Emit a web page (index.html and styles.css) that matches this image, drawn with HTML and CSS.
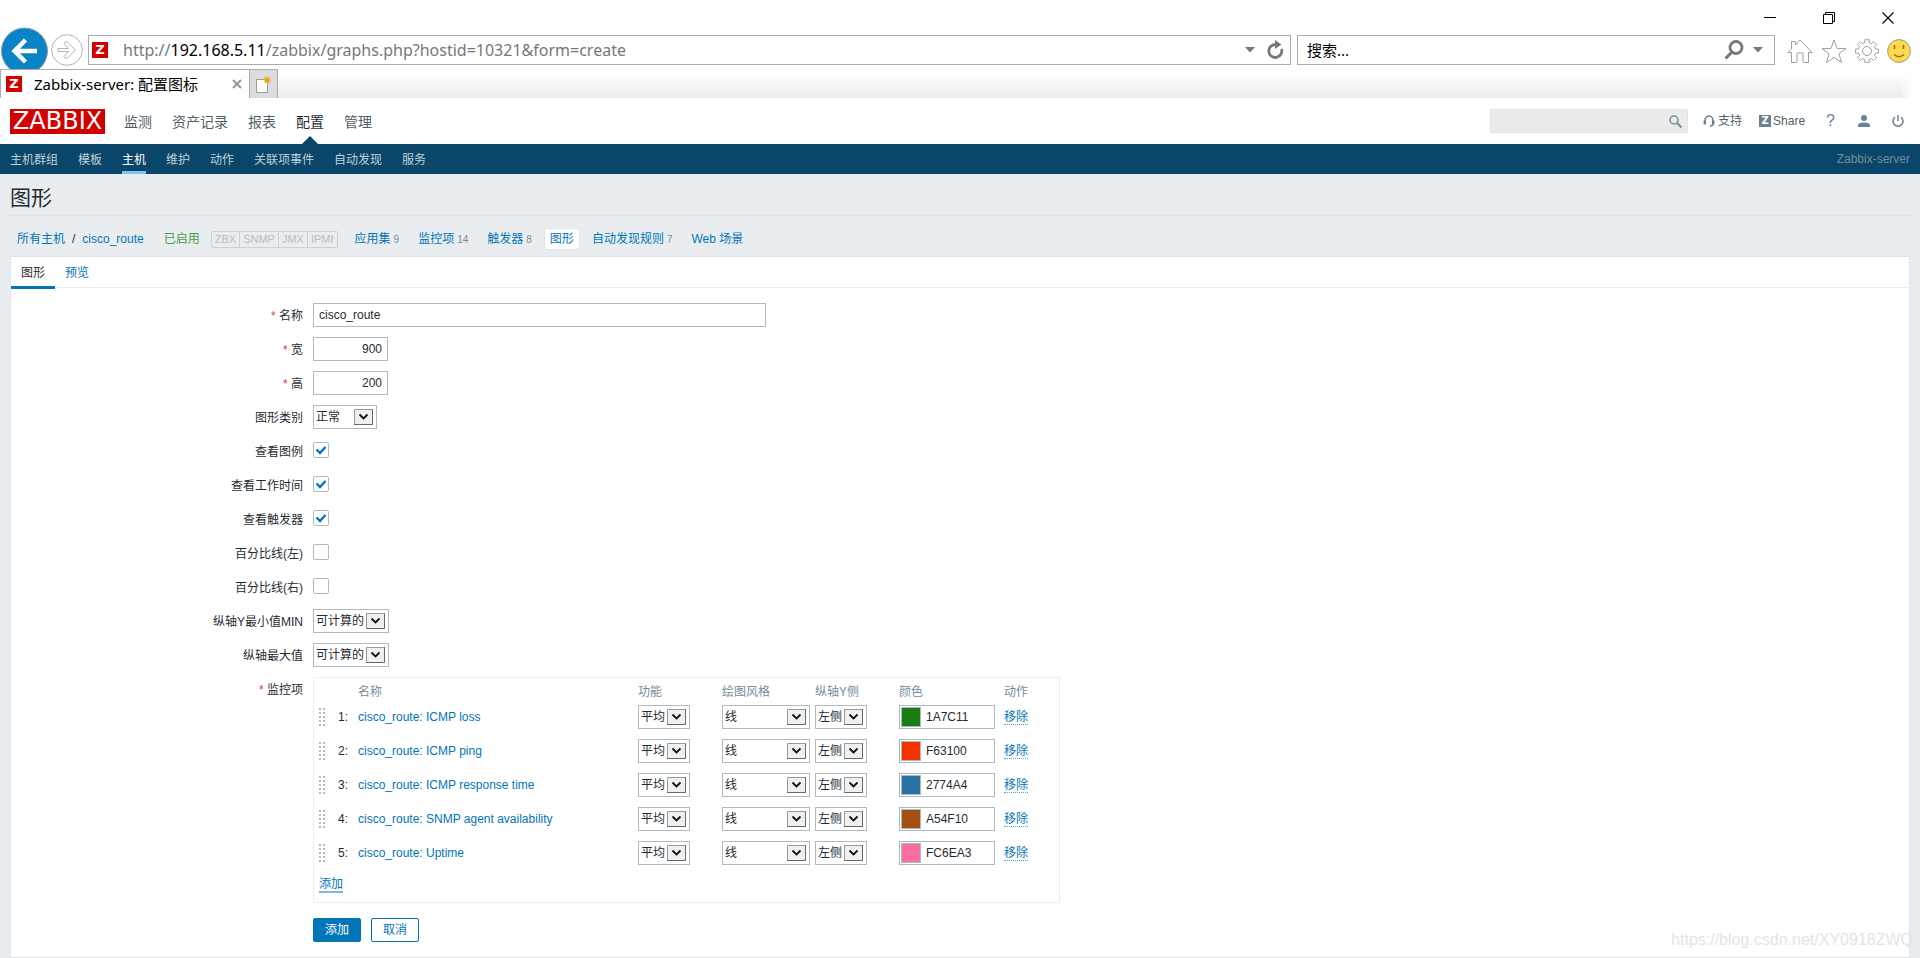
FILE: index.html
```html
<!DOCTYPE html>
<html lang="zh-CN">
<head>
<meta charset="utf-8">
<title>Zabbix-server: 配置图标</title>
<link rel="stylesheet" href="styles.css">
</head>
<body>
<div class="browser">
  <div class="titlebar">
    <button class="plain" aria-label="最小化"><svg width="12" height="12"><path d="M0 5.500h12" stroke="#000"/></svg></button>
    <button class="plain" aria-label="还原"><svg width="12" height="12" fill="none" stroke="#000"><path d="M.5 2.500h9v9h-9zM2.500 2.500v-2h9v9h-2"/></svg></button>
    <button class="plain" aria-label="关闭"><svg width="12" height="12"><path d="M.5.5l11 11M11.500.5l-11 11" stroke="#000" stroke-width="1.100"/></svg></button>
  </div>
  <div class="toolbar">
    <button class="plain back" aria-label="后退"><svg width="47" height="42" viewBox="0 0 47 42"><circle cx="23.500" cy="24" r="23" fill="#0a84c6" stroke="#8c9aa3"/><path d="M36 24H14M24.500 13L13.500 24l11 11" fill="none" stroke="#fff" stroke-width="4.500"/></svg></button>
    <button class="plain forward" aria-label="前进"><svg width="32" height="32" viewBox="0 0 32 32" fill="none" stroke="#b4b4b4"><circle cx="16" cy="16" r="15.300"/><path d="M7 14.500h10.500l-4.500-5 1-1.500h2.500l8 8-8 8H14l-1-1.500 4.500-5H7z"/></svg></button>
    <div class="address">
      <span class="favicon">Z</span>
      <div class="url" role="textbox" aria-label="地址" contenteditable="true">http://<b>192.168.5.11</b>/zabbix/graphs.php?hostid=10321&amp;form=create</div>
      <button class="plain" aria-label="地址列表"><svg width="10" height="6"><path d="M0 0h10L5 5.500z" fill="#777"/></svg></button>
      <button class="plain" aria-label="刷新"><svg width="18" height="20" viewBox="0 0 18 20"><path d="M9.500 4.500A6.500 6.500 0 1 0 15.500 9" fill="none" stroke="#777" stroke-width="2.800"/><path d="M9 0l6.500 4.500L9 9z" fill="#777"/></svg></button>
    </div>
    <div class="websearch">
      <input type="text" aria-label="网页搜索" value="搜索...">
      <button class="plain" aria-label="搜索"><svg width="20" height="20" viewBox="0 0 20 20" fill="none" stroke="#777"><circle cx="12" cy="7.500" r="6" stroke-width="2.800"/><path d="M8 12l-6.500 6.500" stroke-width="3"/></svg></button>
      <button class="plain" aria-label="搜索选项"><svg width="10" height="6"><path d="M0 0h10L5 5.500z" fill="#777"/></svg></button>
    </div>
    <div class="tools">
      <button class="plain" aria-label="主页"><svg width="26" height="24" viewBox="0 0 26 24" fill="#fff" stroke="#a0a0a0"><path d="M4.500 13.500H.8L4.500 10V2.500h4V6L13 1l12.200 12.500h-3.700v10h-5.500v-9.500h-6v9.500H4.500z"/></svg></button>
      <button class="plain" aria-label="收藏夹"><svg width="26" height="24" viewBox="0 0 26 24" fill="#fff" stroke="#a0a0a0"><path d="M13 1l3 8.500h9l-7 5.500 2.500 8.500L13 18.500 5.500 23.500 8 15 1 9.500h9z"/></svg></button>
      <button class="plain" aria-label="设置"><svg width="24" height="24" viewBox="0 0 24 24" fill="#fff" stroke="#a0a0a0"><path d="M9.800.7h4.400v3l2.300 1 2.200-2.200 3 3-2.200 2.300 1 2.200h2.900v4.200h-2.900l-1 2.200 2.200 2.300-3 3-2.200-2.200-2.300 1v2.900H9.800v-2.900l-2.300-1-2.200 2.200-3-3 2.200-2.300-1-2.200H.6v-4.200h2.900l1-2.200-2.200-2.300 3-3 2.200 2.200 2.300-1z"/><circle cx="12" cy="12" r="4.500"/></svg></button>
      <button class="plain" aria-label="反馈"><svg width="24" height="24" viewBox="0 0 24 24"><circle cx="12" cy="12" r="11.400" fill="#ffd84b" stroke="#9a9a9a"/><path d="M7.500 6v4M16.500 6v4" stroke="#8d7316" stroke-width="1.500"/><path d="M7 15.500q5 4.500 10 0" fill="none" stroke="#8d7316" stroke-width="1.500"/></svg></button>
    </div>
  </div>
  <div class="tabstrip">
    <div class="tab">
      <span class="favicon">Z</span>
      <span class="tabtitle">Zabbix-server: 配置图标</span>
      <button class="plain" aria-label="关闭标签页"><svg width="10" height="10"><path d="M1 1l8 8M9 1L1 9" stroke="#999" stroke-width="2.200"/></svg></button>
    </div>
    <button class="newtab" aria-label="新建标签页"><svg width="16" height="17" viewBox="0 0 16 17"><path d="M.5 3.500h11v13H.5z" fill="#fff" stroke="#999"/><path d="M11 .5v7M7.500 4h7M8.500 1.500l5 5M13.500 1.500l-5 5" stroke="#f0a21c" stroke-width="1.300"/></svg></button>
    <div class="strip"></div>
  </div>
</div>

<header class="top">
  <a class="logo" href="#">ZABBIX</a>
  <nav class="mainnav">
    <a href="#">监测</a><a href="#">资产记录</a><a href="#">报表</a><a href="#" class="on">配置</a><a href="#">管理</a>
  </nav>
  <div class="sitesearch">
    <input type="text" aria-label="站内搜索">
    <button class="plain" aria-label="查找"><svg width="13" height="13" viewBox="0 0 13 13" fill="none" stroke="#768d99"><circle cx="5" cy="5" r="4" stroke-width="1.500"/><path d="M8 8l4.500 4.500" stroke-width="2"/></svg></button>
  </div>
  <a class="toplink support" href="#"><svg width="12" height="12" viewBox="0 0 12 12" fill="none" stroke="#6b8090"><path d="M2 8.500V5.500a4 4.500 0 0 1 8 0v3q0 2.500-3 2.500" stroke-width="1.500"/><path d="M1.800 5.500v4M10.200 5.500v4" stroke-width="2.400"/></svg>支持</a>
  <a class="toplink share" href="#"><span class="zmark">Z</span>Share</a>
  <a class="toplink help" href="#" aria-label="帮助">?</a>
  <a class="toplink user" href="#" aria-label="用户"><svg width="12" height="12" viewBox="0 0 12 12" fill="#6b8090"><circle cx="6" cy="3" r="3"/><path d="M0 12V10.500Q0 7.500 6 7.500t6 3V12z"/></svg></a>
  <a class="toplink power" href="#" aria-label="退出"><svg width="12" height="12" viewBox="0 0 12 12" fill="none" stroke="#6b8090" stroke-width="1.500"><path d="M3 2.200a5 5 0 1 0 6 0M6 0v6"/></svg></a>
</header>
<nav class="subnav">
  <a href="#">主机群组</a><a href="#">模板</a><a href="#" class="on">主机</a><a href="#">维护</a><a href="#">动作</a><a href="#">关联项事件</a><a href="#">自动发现</a><a href="#">服务</a>
  <span class="server">Zabbix-server</span>
</nav>

<main class="page">
  <h1>图形</h1>
  <div class="crumbs">
    <a href="#">所有主机</a><span class="slash">/</span><a href="#">cisco_route</a>
    <span class="enabled">已启用</span>
    <span class="avail"><span>ZBX</span><span>SNMP</span><span>JMX</span><span>IPMI</span></span>
    <span class="item"><a href="#">应用集</a><sup>9</sup></span>
    <span class="item"><a href="#">监控项</a><sup>14</sup></span>
    <span class="item"><a href="#">触发器</a><sup>8</sup></span>
    <a class="current" href="#">图形</a>
    <span class="item"><a href="#">自动发现规则</a><sup>7</sup></span>
    <a class="item" href="#">Web 场景</a>
  </div>
  <section class="panel">
    <div class="tabs"><a href="#" class="on">图形</a><a href="#">预览</a></div>
    <form class="form">
      <label class="req" for="name">名称</label><div><input class="text name" id="name" type="text" value="cisco_route"></div>
      <label class="req" for="width">宽</label><div><input class="text num" id="width" type="text" value="900"></div>
      <label class="req" for="height">高</label><div><input class="text num" id="height" type="text" value="200"></div>
      <label for="type">图形类别</label><div><select class="w64" id="type"><option>正常</option></select></div>
      <label for="legend">查看图例</label><div><input id="legend" type="checkbox" checked></div>
      <label for="worktime">查看工作时间</label><div><input id="worktime" type="checkbox" checked></div>
      <label for="triggers">查看触发器</label><div><input id="triggers" type="checkbox" checked></div>
      <label for="pleft">百分比线(左)</label><div><input id="pleft" type="checkbox"></div>
      <label for="pright">百分比线(右)</label><div><input id="pright" type="checkbox"></div>
      <label for="ymin">纵轴Y最小值MIN</label><div><select class="w76" id="ymin"><option>可计算的</option></select></div>
      <label for="ymax">纵轴最大值</label><div><select class="w76" id="ymax"><option>可计算的</option></select></div>
      <span class="label req">监控项</span>
      <div class="items">
        <table>
          <colgroup><col class="c-drag"><col class="c-no"><col class="c-name"><col class="c-func"><col class="c-style"><col class="c-func"><col class="c-color"><col class="c-act"></colgroup>
          <thead><tr><th></th><th></th><th>名称</th><th>功能</th><th>绘图风格</th><th>纵轴Y侧</th><th>颜色</th><th>动作</th></tr></thead>
          <tbody>
            <tr><td><div class="drag"></div></td><td class="no">1:</td><td><a href="#">cisco_route: ICMP loss</a></td><td><select class="w52" aria-label="功能"><option>平均</option></select></td><td><select class="w88" aria-label="绘图风格"><option>线</option></select></td><td><select class="w52" aria-label="纵轴Y侧"><option>左侧</option></select></td><td><div class="color"><button type="button" class="swatch s1" aria-label="选择颜色"></button><input type="text" aria-label="颜色" value="1A7C11"></div></td><td><a class="dotted" href="#">移除</a></td></tr>
            <tr><td><div class="drag"></div></td><td class="no">2:</td><td><a href="#">cisco_route: ICMP ping</a></td><td><select class="w52" aria-label="功能"><option>平均</option></select></td><td><select class="w88" aria-label="绘图风格"><option>线</option></select></td><td><select class="w52" aria-label="纵轴Y侧"><option>左侧</option></select></td><td><div class="color"><button type="button" class="swatch s2" aria-label="选择颜色"></button><input type="text" aria-label="颜色" value="F63100"></div></td><td><a class="dotted" href="#">移除</a></td></tr>
            <tr><td><div class="drag"></div></td><td class="no">3:</td><td><a href="#">cisco_route: ICMP response time</a></td><td><select class="w52" aria-label="功能"><option>平均</option></select></td><td><select class="w88" aria-label="绘图风格"><option>线</option></select></td><td><select class="w52" aria-label="纵轴Y侧"><option>左侧</option></select></td><td><div class="color"><button type="button" class="swatch s3" aria-label="选择颜色"></button><input type="text" aria-label="颜色" value="2774A4"></div></td><td><a class="dotted" href="#">移除</a></td></tr>
            <tr><td><div class="drag"></div></td><td class="no">4:</td><td><a href="#">cisco_route: SNMP agent availability</a></td><td><select class="w52" aria-label="功能"><option>平均</option></select></td><td><select class="w88" aria-label="绘图风格"><option>线</option></select></td><td><select class="w52" aria-label="纵轴Y侧"><option>左侧</option></select></td><td><div class="color"><button type="button" class="swatch s4" aria-label="选择颜色"></button><input type="text" aria-label="颜色" value="A54F10"></div></td><td><a class="dotted" href="#">移除</a></td></tr>
            <tr><td><div class="drag"></div></td><td class="no">5:</td><td><a href="#">cisco_route: Uptime</a></td><td><select class="w52" aria-label="功能"><option>平均</option></select></td><td><select class="w88" aria-label="绘图风格"><option>线</option></select></td><td><select class="w52" aria-label="纵轴Y侧"><option>左侧</option></select></td><td><div class="color"><button type="button" class="swatch s5" aria-label="选择颜色"></button><input type="text" aria-label="颜色" value="FC6EA3"></div></td><td><a class="dotted" href="#">移除</a></td></tr>
          </tbody>
        </table>
        <div class="addrow"><a href="#">添加</a></div>
      </div>
      <div class="buttons"><button type="button" class="btn primary">添加</button><button type="button" class="btn">取消</button></div>
    </form>
  </section>
  <div class="watermark">https://blog.csdn.net/XY0918ZWQ</div>
</main>
</body>
</html>
```
FILE: styles.css
```css
* { box-sizing: border-box; }
body {
  margin: 0;
  min-height: 100vh;
  display: flex;
  flex-direction: column;
  background: #e9edf0;
  color: #1f2c33;
  font: 12px/14px "Liberation Sans", "Noto Sans CJK SC", sans-serif;
}
a { color: #0275b8; text-decoration: none; }
svg { display: block; flex: none; }
input, select, button { font: inherit; color: inherit; margin: 0; border-radius: 0; outline: 0; }
.plain { border: 0; padding: 0; background: none; flex: none; }

/* browser frame */
.browser { background: #fff; font-family: "Noto Sans", "Noto Sans CJK SC", sans-serif; color: #000; }
.titlebar { display: flex; align-items: flex-start; justify-content: flex-end; gap: 47px; height: 27px; padding: 12px 26px 0 0; }
.toolbar { display: flex; height: 42px; padding-left: 1px; }
.back { height: 42px; }
.forward { margin: 7px 5px 0 3px; height: 32px; }
.address, .websearch { display: flex; align-items: center; height: 30px; margin-top: 8px; border: 1px solid #ababab; background: #fff; }
.address { flex: 1; padding: 0 6px 0 3px; gap: 11px; }
.favicon { flex: none; width: 16px; height: 16px; background: #d40000; color: #fff; font: bold 13px/16px "DejaVu Sans", sans-serif; text-align: center; }
.url { flex: 1; padding-left: 4px; font-size: 16px; line-height: 24px; color: #777; white-space: nowrap; overflow: hidden; }
.url b { font-weight: normal; color: #000; }
.websearch { width: 478px; margin-left: 6px; padding: 0 11px 0 9px; gap: 9px; }
.websearch input { flex: 1; min-width: 0; border: 0; padding: 0; font-size: 15px; line-height: 24px; }
.tools { display: flex; align-items: center; gap: 8px; height: 30px; margin: 9px 9px 0 12px; }
.tabstrip { display: flex; height: 29px; }
.tab { display: flex; align-items: center; width: 249px; padding: 0 7px 0 5px; border: solid #ababab; border-width: 1px 0 0 1px; gap: 12px; }
.tabtitle { flex: 1; font-size: 15px; line-height: 24px; white-space: nowrap; }
.newtab { width: 29px; padding: 0 6px; border: 1px solid #ababab; border-bottom: 0; background: #dcdcdc; }
.strip { flex: 1; background: linear-gradient(to left, #fff 8px, transparent 20px), linear-gradient(#fff 4px, #ebebeb); }

/* site header */
.top { display: flex; align-items: center; height: 46px; padding: 0 10px; background: #fff; }
.logo { width: 95px; height: 25px; background: #d40000; color: #fff; font: 24px/25px "DejaVu Sans", sans-serif; text-align: center; }
.mainnav { display: flex; flex: 1; gap: 20px; margin-left: 19px; font-size: 14px; line-height: 48px; }
.mainnav a { height: 46px; color: #4f5f68; }
.mainnav .on { position: relative; color: #1f2c33; }
.mainnav .on::after { content: ""; position: absolute; left: 50%; bottom: 0; margin-left: -8px; border: solid transparent; border-width: 0 8px 8px; border-bottom-color: #0a466a; }
.sitesearch { display: flex; align-items: center; width: 198px; height: 24px; padding: 0 5px; border: 1px solid #dfe4e7; background: #ebebeb; }
.sitesearch input { flex: 1; min-width: 0; border: 0; background: none; }
.toplink { display: flex; align-items: center; color: #4f5f68; }
.support { gap: 3px; margin-left: 15px; }
.share { gap: 2px; margin-left: 17px; }
.zmark { width: 12px; height: 12px; background: #6b8090; color: #fff; font: bold 10px/12px "DejaVu Sans", sans-serif; text-align: center; }
.help { margin-left: 21px; color: #6b8090; font-size: 16px; line-height: 16px; }
.user { margin-left: 23px; }
.power { margin: 0 6px 0 22px; }
.subnav { display: flex; gap: 20px; height: 30px; padding: 0 10px; background: #0a466a; line-height: 32px; }
.subnav a { color: #c0d0da; height: 30px; }
.subnav .on { color: #fff; border-bottom: 3px solid #7ac5f2; }
.server { margin-left: auto; color: #768d99; line-height: 30px; }

/* page */
.page { position: relative; flex: 1; display: flex; flex-direction: column; padding: 0 10px; }
h1 { margin: 0; height: 42px; border-bottom: 1px solid #dfe4e7; font-size: 21px; font-weight: normal; line-height: 48px; }
.crumbs { display: flex; align-items: center; height: 40px; padding: 6px 7px 0; }
.slash { margin: 0 7px; }
.enabled { margin-left: 20px; color: #429e47; }
.avail { display: flex; height: 17px; margin: 0 5px 0 11px; border: 1px solid #c8d2d8; border-radius: 2px; font-size: 11px; line-height: 15px; color: #b4c0c7; }
.avail span { padding: 0 3px; }
.avail span + span { border-left: 1px solid #c8d2d8; }
.item { margin: 0 7px 0 12px; white-space: nowrap; }
.item sup { margin-left: 3px; font-size: 10px; line-height: 12px; vertical-align: baseline; color: #768d99; }
.current { height: 22px; margin-left: 5px; padding: 0 5px; border: 1px solid #dfe4e7; border-radius: 3px; background: #fff; line-height: 20px; }
.panel { flex: 1; border: 1px solid #dfe4e7; background: #fff; }
.tabs { display: flex; height: 31px; border-bottom: 1px solid #ebeef0; line-height: 32px; }
.tabs a { height: 32px; padding: 0 10px; }
.tabs .on { color: #1f2c33; border-bottom: 3px solid #0275b8; }

/* form */
.form { display: grid; grid-template-columns: 292px 1fr; column-gap: 10px; row-gap: 10px; padding: 15px 0; }
.form > label, .label { text-align: right; line-height: 26px; height: 24px; }
.req::before { content: "* "; color: #e33734; }
.form > div { min-height: 24px; }
.text { display: block; height: 24px; padding: 0 5px; border: 1px solid #acbbc2; background: #fff; }
.name { width: 453px; }
.num { width: 75px; text-align: right; }
select { display: block; appearance: none; height: 24px; padding: 0 0 0 2px; border: 1px solid #acbbc2; background: #fff url("data:image/svg+xml,%3Csvg xmlns='http://www.w3.org/2000/svg' width='19' height='16'%3E%3Cpath d='M.5.5h18v15H.5z' fill='%23f0f0f0' stroke='%23999'/%3E%3Cpath d='M0 15.500h18.500V0' fill='none' stroke='%23696969'/%3E%3Cpath d='M5.500 5.500l4 4 4-4' fill='none' stroke='%23111' stroke-width='1.800'/%3E%3C/svg%3E") no-repeat right 3px center; }
.w52 { width: 52px; }
.w64 { width: 64px; }
.w76 { width: 76px; }
.w88 { width: 88px; }
input[type="checkbox"] { display: block; appearance: none; width: 16px; height: 16px; margin-top: 3px; border: 1px solid #acbbc2; border-radius: 2px; background: #fff; }
input[type="checkbox"]:checked { background: #fff url("data:image/svg+xml,%3Csvg xmlns='http://www.w3.org/2000/svg' width='12' height='12'%3E%3Cpath d='M1.500 5.500l3.500 3.500 5.500-6' fill='none' stroke='%230275b8' stroke-width='2.400'/%3E%3C/svg%3E") no-repeat center; }
.items { width: 747px; border: 1px solid #ebeef0; }
table { width: 100%; table-layout: fixed; border-collapse: collapse; }
th, td { height: 34px; padding: 0 5px; text-align: left; white-space: nowrap; }
th { height: 22px; padding-top: 6px; font-weight: normal; color: #768d99; }
.c-drag { width: 19px; }
.c-no { width: 20px; }
.c-name { width: 280px; }
.c-func { width: 84px; }
.c-style { width: 93px; }
.c-color { width: 105px; }
.c-act { width: 60px; }
.drag { width: 6px; height: 18px; background: repeating-linear-gradient(#fff0 0 2px, #fff 2px 4px), linear-gradient(to right, #acbbc2 2px, #fff 2px 4px, #acbbc2 4px); }
.no { padding-left: 0; text-align: right; }
.color { display: flex; align-items: center; width: 96px; height: 24px; padding: 0 1px; border: 1px solid #acbbc2; }
.color input { flex: 1; min-width: 0; padding: 0 5px; border: 0; }
.swatch { width: 20px; height: 20px; padding: 0; border: 1px solid #acbbc2; }
.s1 { background: #1a7c11; }
.s2 { background: #f63100; }
.s3 { background: #2774a4; }
.s4 { background: #a54f10; }
.s5 { background: #fc6ea3; }
.dotted { border-bottom: 1px dotted #58a5d3; }
.addrow { height: 32px; padding: 7px 5px 0; }
.addrow a { border-bottom: 2px solid #7ab8dc; }
.buttons { grid-column: 2; display: flex; gap: 10px; margin-top: 5px; }
.btn { height: 24px; padding: 0 11px; border: 1px solid #0275b8; border-radius: 2px; background: #fff; color: #0275b8; line-height: 20px; }
.primary { background: #0275b8; color: #fff; }
.watermark { position: absolute; right: 7px; bottom: 8px; font-size: 16px; line-height: 20px; color: #e4e4e4; }
```
